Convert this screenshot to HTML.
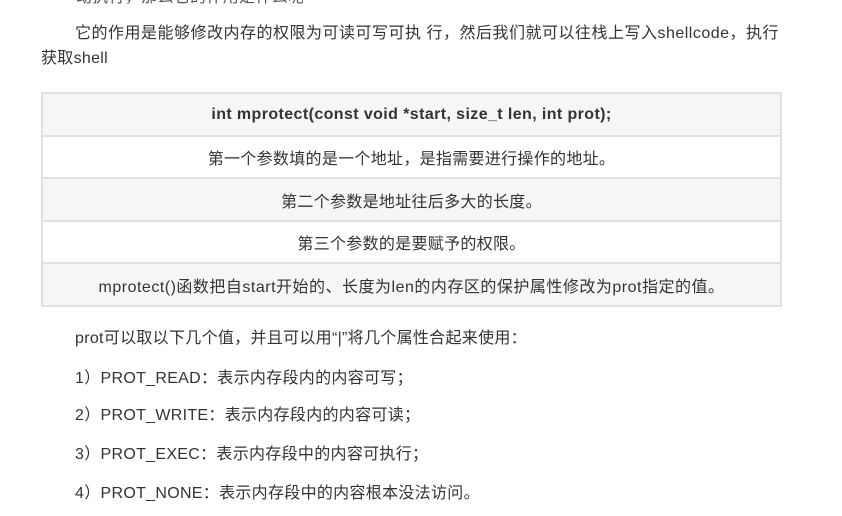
<!DOCTYPE html>
<html><head><meta charset="utf-8"><style>
html,body{margin:0;padding:0;background:#fff;width:842px;height:516px;overflow:hidden}
body{font-family:"Liberation Sans","Noto Sans CJK SC",sans-serif;color:#333;font-size:16px;letter-spacing:0.3px;position:relative}
.t{position:absolute;white-space:nowrap;line-height:20px}
table{position:absolute;left:41px;top:92px;width:741px;border-collapse:collapse;font-size:16px}
td{border:2px solid #dfe2e5;text-align:center;height:40px;padding:0;color:#333}
tr:nth-child(odd) td{background:#f6f6f6;height:41px}
</style></head><body>
<div class="t" style="left:76px;top:-12px;color:#555">动执行，那么它的作用是什么呢</div>
<div class="t" style="left:75px;top:24px;letter-spacing:0.5px">它的作用是能够修改内存的权限为可读可写可执 行，然后我们就可以往栈上写入shellcode，执行</div>
<div class="t" style="left:41px;top:49px">获取shell</div>
<table>
<tr><td><b style="letter-spacing:0.4px">int mprotect(const void *start, size_t len, int prot);</b></td></tr>
<tr><td>第一个参数填的是一个地址，是指需要进行操作的地址。</td></tr>
<tr><td>第二个参数是地址往后多大的长度。</td></tr>
<tr><td>第三个参数的是要赋予的权限。</td></tr>
<tr><td style="letter-spacing:0.5px">mprotect()函数把自start开始的、长度为len的内存区的保护属性修改为prot指定的值。</td></tr>
</table>
<div class="t" style="left:75px;top:329px">prot可以取以下几个值，并且可以用“|”将几个属性合起来使用：</div>
<div class="t" style="left:75px;top:369px">1）PROT_READ：表示内存段内的内容可写；</div>
<div class="t" style="left:75px;top:406px">2）PROT_WRITE：表示内存段内的内容可读；</div>
<div class="t" style="left:75px;top:445px">3）PROT_EXEC：表示内存段中的内容可执行；</div>
<div class="t" style="left:75px;top:484px">4）PROT_NONE：表示内存段中的内容根本没法访问。</div>
</body></html>
